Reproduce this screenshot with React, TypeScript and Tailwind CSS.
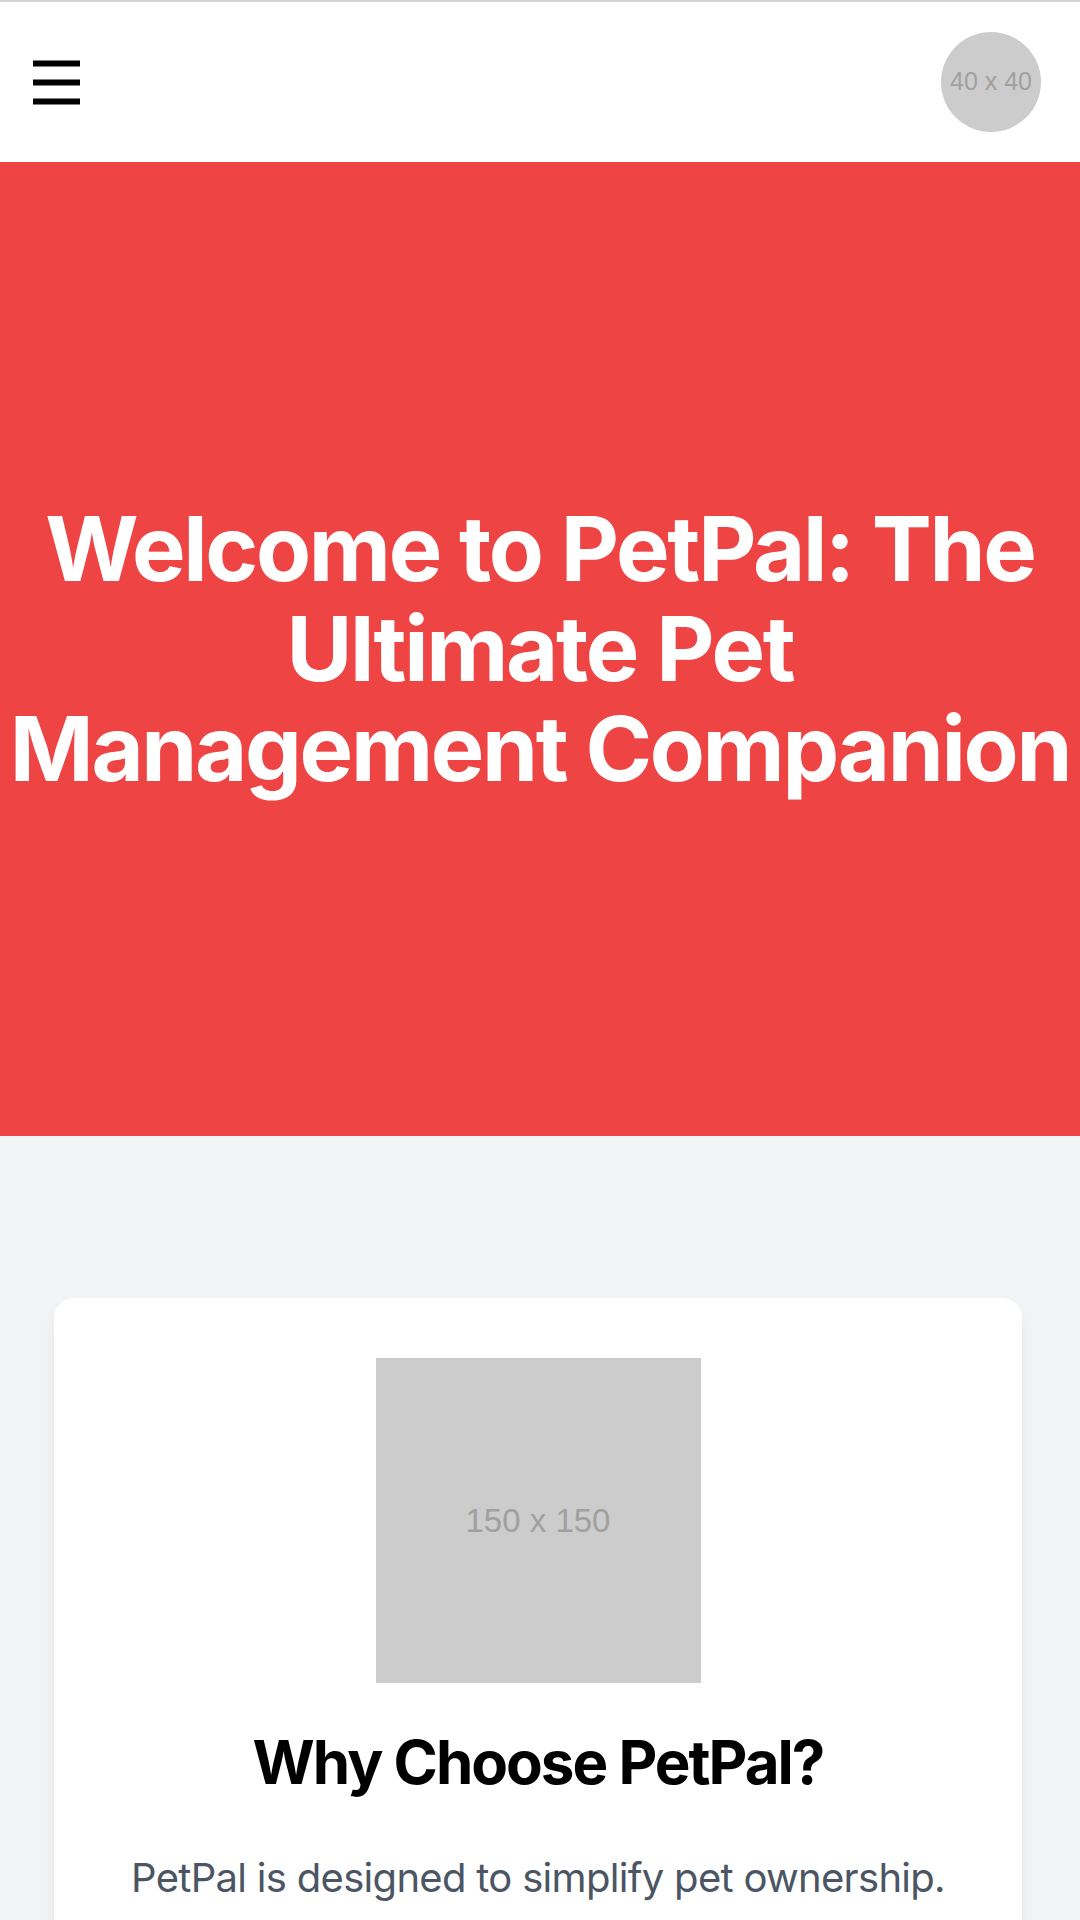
import React from "react";

export default function App() {
  return (
    <div className="w-[1080px] min-h-[1920px] bg-[#f3f4f6] font-['Inter',sans-serif]">
      <header className="h-[162px] border-t-2 border-[#d4d4d4] bg-white flex items-center justify-between pl-[33px] pr-[39px]">
        <button className="w-[47px] h-[46px] flex items-center" aria-label="menu">
          <svg width="47" height="46" viewBox="0 0 47 46">
            <rect x="0" y="1.5" width="47" height="6" fill="#000" />
            <rect x="0" y="20.5" width="47" height="6" fill="#000" />
            <rect x="0" y="39.5" width="47" height="6" fill="#000" />
          </svg>
        </button>
        <div className="w-[100px] h-[100px] rounded-full bg-[#cccccc] flex items-center justify-center">
          <span className="text-[25px] text-[#a0a0a0] font-['Liberation_Sans',sans-serif]">40 x 40</span>
        </div>
      </header>

      <section className="h-[974px] bg-[#ef4444] flex items-center justify-center">
        <h1 className="text-white font-bold text-[90px] leading-[100px] text-center tracking-[-2.3px] flex flex-col items-center">
          <span className="whitespace-nowrap">Welcome to PetPal: The</span>
          <span className="whitespace-nowrap">Ultimate Pet</span>
          <span className="whitespace-nowrap">Management Companion</span>
        </h1>
      </section>

      <section className="pt-[162px] pl-[54px] pr-[58px] pb-[100px]">
        <div className="bg-white rounded-[20px] shadow-[0_10px_25px_-5px_rgba(0,0,0,0.08),0_4px_10px_-4px_rgba(0,0,0,0.06)] p-[60px] flex flex-col items-center">
          <div className="w-[325px] h-[325px] bg-[#cccccc] flex items-center justify-center">
            <span className="text-[33px] text-[#a0a0a0] font-['Liberation_Sans',sans-serif]">150 x 150</span>
          </div>
          <h2 className="mt-[39px] text-[60px] leading-[80px] font-bold text-black text-center tracking-[-2px] whitespace-nowrap">
            Why Choose PetPal?
          </h2>
          <p className="mt-[46px] text-[40px] leading-[60px] text-[#4b5563] text-center tracking-[-0.7px]">
            PetPal is designed to simplify pet ownership.
          </p>
        </div>
      </section>
    </div>
  );
}
